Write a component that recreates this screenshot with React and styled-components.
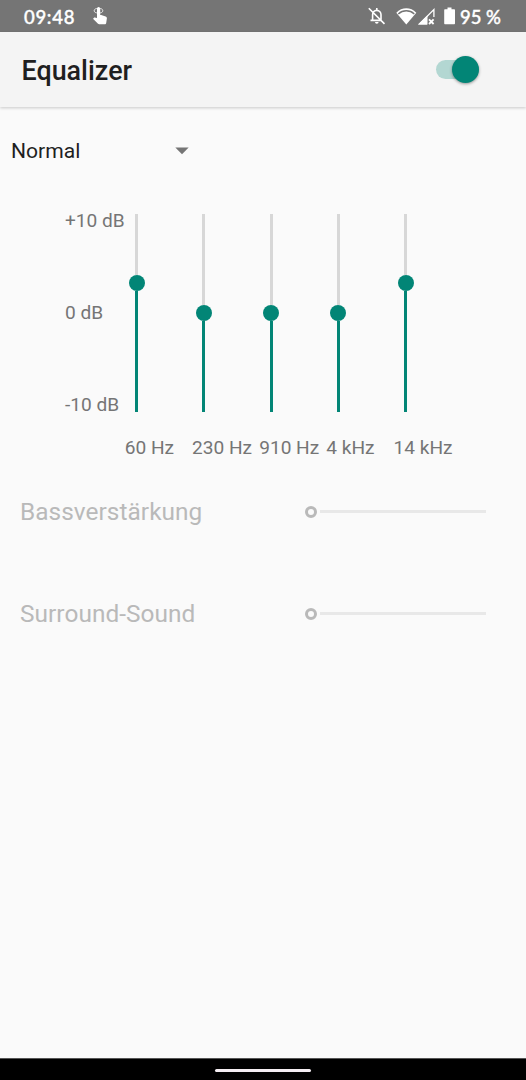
import React, { useState } from "react";
import styled, { createGlobalStyle } from "styled-components";

const teal = "#028576";

const GlobalStyle = createGlobalStyle`
  * {
    box-sizing: border-box;
  }

  body {
    margin: 0;
    background: #fafafa;
    font-family: Roboto, "Liberation Sans", sans-serif;
  }
`;

const Screen = styled.div`
  display: flex;
  flex-direction: column;
  width: 526px;
  height: 1080px;
  overflow: hidden;
  background: #fafafa;
`;

/* status bar */
const StatusBar = styled.div`
  display: flex;
  align-items: center;
  flex: none;
  height: 32px;
  padding: 0 25px 0 24px;
  background: #757575;
  color: #fff;
`;

const StatusText = styled.span`
  padding-top: 1px;
  font-family: Lato, Roboto, sans-serif;
  font-size: 18.5px;
  font-weight: 500;
  line-height: 32px;
  letter-spacing: ${(p) => p.$spacing || "0"};
  white-space: nowrap;
  -webkit-text-stroke: 0.4px #fff;
`;

const StatusIcon = styled.svg`
  display: block;
  flex: none;
  margin-left: ${(p) => p.$gap}px;
`;

const Spacer = styled.div`
  flex: 1;
`;

/* title bar */
const Header = styled.header`
  display: flex;
  align-items: center;
  justify-content: space-between;
  flex: none;
  height: 75px;
  padding: 0 47.5px 0 21.5px;
  background: #f4f4f4;
  box-shadow: 0 1px 3px rgba(0, 0, 0, 0.2);
`;

const Title = styled.h1`
  margin: 3px 0 0;
  color: #1f1f1f;
  font-size: 26.9px;
  font-weight: 500;
  line-height: 32px;
`;

const Switch = styled.button`
  display: flex;
  align-items: center;
  width: 43px;
  height: 27px;
  padding: 0;
  border: 0;
  background: none;
`;

const SwitchTrack = styled.span`
  display: flex;
  align-items: center;
  justify-content: ${(p) => (p.$on ? "flex-end" : "flex-start")};
  width: 43px;
  height: 19px;
  border-radius: 10px;
  background: ${(p) => (p.$on ? "#b3d7d2" : "#bdbdbd")};
`;

const SwitchThumb = styled.span`
  flex: none;
  width: 27px;
  height: 27px;
  border-radius: 50%;
  background: ${(p) => (p.$on ? teal : "#fafafa")};
  box-shadow: 0 1px 3px rgba(0, 0, 0, 0.4);
`;

/* preset dropdown */
const Preset = styled.div`
  display: flex;
  align-items: center;
  justify-content: space-between;
  flex: none;
  width: 189px;
  height: 30px;
  margin: 29px 0 0 11px;
  padding-right: 11px;
  color: #1f1f1f;
  font-size: 21.1px;
  line-height: 30px;
`;

const Caret = styled.svg`
  display: block;
  flex: none;
  margin-top: -1px;
`;

/* equalizer bands */
const Bands = styled.section`
  display: flex;
  flex: none;
  margin: 48px 0 0 65px;
  color: #757575;
  font-size: 19.1px;
  line-height: 22px;
  white-space: nowrap;
`;

const Scale = styled.div`
  display: flex;
  flex-direction: column;
  justify-content: space-between;
  width: 59.8px;
  height: 206px;
  margin-top: -4px;
`;

const Band = styled.div`
  display: flex;
  flex-direction: column;
  width: 67.2px;
`;

const BandTrack = styled.div`
  display: flex;
  flex-direction: column;
  align-items: center;
  width: 24px;
  height: 198px;
`;

const BandLine = styled.div`
  width: 3px;
  flex: ${(p) => (p.$filled ? "1" : "none")};
  background: ${(p) => (p.$filled ? teal : "#d7d7d7")};
`;

const BandThumb = styled.div`
  flex: none;
  width: 16px;
  height: 16px;
  border-radius: 50%;
  background: ${teal};
`;

const BandLabel = styled.div`
  margin-top: 25px;
`;

/* disabled effects */
const Effects = styled.section`
  display: flex;
  flex-direction: column;
  gap: 70px;
  margin-top: 37px;
  padding: 0 40.5px 0 20px;
`;

const Effect = styled.div`
  display: flex;
  align-items: center;
  justify-content: space-between;
  height: 32px;
`;

const EffectLabel = styled.span`
  color: #b9b9b9;
  font-size: 24.4px;
  line-height: 32px;
  letter-spacing: 0.05px;
`;

const Seek = styled.div`
  display: flex;
  align-items: center;
  gap: 2.5px;
  width: 180.5px;
`;

const SeekThumb = styled.span`
  flex: none;
  width: 12px;
  height: 12px;
  border: 3px solid #b9b9b9;
  border-radius: 50%;
`;

const SeekLine = styled.span`
  flex: 1;
  height: 3px;
  margin-bottom: 1px;
  background: #e8e8e8;
`;

/* gesture bar */
const NavBar = styled.footer`
  display: flex;
  align-items: center;
  justify-content: center;
  flex: none;
  height: 22px;
  margin-top: auto;
  border-top: 1px solid #555;
  background: #000;
`;

const NavPill = styled.div`
  width: 96px;
  height: 3px;
  margin-top: 2px;
  border-radius: 2px;
  background: #f5eef3;
`;

const bands = [
  { label: "60 Hz", offset: 61 },
  { label: "230 Hz", offset: 91 },
  { label: "910 Hz", offset: 91 },
  { label: "4 kHz", offset: 91 },
  { label: "14 kHz", offset: 61 },
];

const effects = ["Bassverstärkung", "Surround-Sound"];

export default function App() {
  const [enabled, setEnabled] = useState(true);

  return (
    <Screen>
      <GlobalStyle />
      <StatusBar>
        <StatusText $spacing="0.7px">09:48</StatusText>
        <StatusIcon $gap={18} width="15" height="18" viewBox="0 0 15 18">
          <ellipse cx="5.5" cy="3.7" rx="4.3" ry="2.3" fill="none" stroke="#fff" strokeWidth="0.8" />
          <path
            fill="#fff"
            d="M4 1.7a1.6 1.6 0 0 1 3.2 0v6.2h1l4.4 1.5c.8.4 1.4 1 1.3 1.8l-.7 4.8c-.1.8-.7 1.3-1.5 1.3H6.2c-.5 0-.9-.2-1.2-.5L0 11.7l.8-.8c.3-.3.7-.4 1.1-.3L4 11z"
          />
        </StatusIcon>
        <Spacer />
        <StatusIcon $gap={0} width="18" height="18" viewBox="0 0 18 18">
          <g fill="none" stroke="#fff" strokeWidth="1.6">
            <path d="M.8 1.3l15.7 15.6M4.6 13.5V7.8c0-2.5 1.7-4.4 4.1-4.4s4.3 1.9 4.3 4.4v5M2.5 13.4h11M8.8 3.4V1" />
          </g>
          <path fill="#fff" d="M7 15h3.6a1.8 1.8 0 0 1-3.6 0z" />
        </StatusIcon>
        <StatusIcon $gap={10} width="21" height="17" viewBox="0 0 21 17">
          <path fill="#fff" d="M.3 4.7C6-1.2 14.600-1.200 20.300 4.700L10.300 16.600z" />
          <path fill="none" stroke="#757575" strokeWidth="1.3" d="M2.300 5.900c4.600-4.200 11.400-4.200 16 0" />
        </StatusIcon>
        <StatusIcon $gap={1} width="18" height="17" viewBox="0 0 18 17">
          <path fill="none" stroke="#fff" strokeWidth="1.3" d="M15.900 9V1.600L1.600 15.800H9" />
          <path fill="#fff" d="M0 16.400L9.500 7.300v9.100z" />
          <path stroke="#fff" strokeWidth="1.8" d="M11 11.300l4.600 4.700M15.600 11.300l-4.600 4.700" />
        </StatusIcon>
        <StatusIcon $gap={8} width="12" height="18" viewBox="0 0 12 18">
          <path
            fill="#fff"
            d="M3.5.5h4v1.8H10c.6 0 1 .4 1 1v13c0 .6-.4 1-1 1H1.2c-.6 0-1-.4-1-1v-13c0-.6.4-1 1-1h2.3z"
          />
        </StatusIcon>
        <StatusIcon $gap={0} width="4" height="18" />
        <StatusText>95 %</StatusText>
      </StatusBar>

      <Header>
        <Title>Equalizer</Title>
        <Switch aria-label="Equalizer" onClick={() => setEnabled(!enabled)}>
          <SwitchTrack $on={enabled}>
            <SwitchThumb $on={enabled} />
          </SwitchTrack>
        </Switch>
      </Header>

      <Preset>
        Normal
        <Caret width="14" height="8" viewBox="0 0 14 8">
          <path fill="#757575" d="M.3.5h13.4L7 7.2z" />
        </Caret>
      </Preset>

      <Bands>
        <Scale>
          <span>+10 dB</span>
          <span>0 dB</span>
          <span>-10 dB</span>
        </Scale>
        {bands.map((band) => (
          <Band key={band.label}>
            <BandTrack>
              <BandLine style={{ height: band.offset }} />
              <BandThumb />
              <BandLine $filled />
            </BandTrack>
            <BandLabel>{band.label}</BandLabel>
          </Band>
        ))}
      </Bands>

      <Effects>
        {effects.map((name) => (
          <Effect key={name}>
            <EffectLabel>{name}</EffectLabel>
            <Seek>
              <SeekThumb />
              <SeekLine />
            </Seek>
          </Effect>
        ))}
      </Effects>

      <NavBar>
        <NavPill />
      </NavBar>
    </Screen>
  );
}
